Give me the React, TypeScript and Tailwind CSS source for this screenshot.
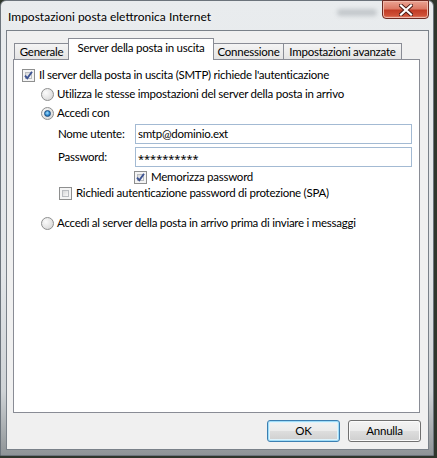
import React from "react"

const ui = "font-[family-name:Lato,sans-serif] text-[11.5px] tracking-[-0.25px] leading-[16px] text-black whitespace-nowrap"

function CheckBox({ checked = false }: { checked?: boolean }) {
  return (
    <span className="relative flex w-[13px] h-[13px] shrink-0 border border-[#8e8f8f] bg-[#f4f4f4] p-[2px]">
      <span className="flex-1 border border-[#b9bcc0] bg-[linear-gradient(135deg,#d8d9da,#f8f8f8)]" />
      {checked && (
        <svg className="absolute left-0 top-0" width="11" height="11" viewBox="0 0 11 11">
          <path d="M2 5.6 L4.3 8.2 L9 1.8" fill="none" stroke="#3d5392" strokeWidth="1.9" />
        </svg>
      )}
    </span>
  )
}

function Radio({ checked = false }: { checked?: boolean }) {
  return (
    <span className="flex items-center justify-center w-[13px] h-[13px] shrink-0 rounded-full border border-[#8e8f8f] bg-[radial-gradient(circle_at_35%_35%,#fbfbfb_0%,#e4e4e4_55%,#cfcfcf_100%)]">
      {checked && (
        <span className="w-[7px] h-[7px] rounded-full border border-[#1d4d7e] bg-[radial-gradient(circle_at_45%_40%,#a5e0ff_0%,#2f8bd2_55%,#0d4f8f_100%)]" />
      )}
    </span>
  )
}

function Tab({ label, active = false, className = "" }: { label: string; active?: boolean; className?: string }) {
  return (
    <div
      className={
        "flex items-center justify-center border border-b-0 border-[#898c95] " +
        (active
          ? "relative z-10 h-[22px] bg-white pb-[3px] "
          : "h-[17px] bg-[linear-gradient(180deg,#f4f4f4,#e3e3e3)] pb-[1px] ") +
        className
      }
    >
      {label}
    </div>
  )
}

function Field({ value, className = "" }: { value: string; className?: string }) {
  return (
    <div className={"flex items-center w-[277px] h-[20px] px-[2px] border border-[#a3bad3] bg-white " + className}>
      {value}
    </div>
  )
}

function WinButton({ label, isDefault = false }: { label: string; isDefault?: boolean }) {
  return (
    <button
      className={
        "w-[73px] h-[22px] rounded-[3px] border bg-[linear-gradient(180deg,#f3f3f3_0%,#ebebeb_48%,#dddddd_52%,#cfcfcf_100%)] " +
        (isDefault
          ? "border-[#3c7fb1] shadow-[inset_0_0_0_1px_#9fdcf8,inset_0_0_0_2px_#dff3fc]"
          : "border-[#707070] shadow-[inset_0_0_0_1px_#fbfbfb]")
      }
    >
      {label}
    </button>
  )
}

export default function App() {
  return (
    <div className={"w-[437px] h-[458px] overflow-hidden bg-[#2f362c] " + ui}>
      <div className="relative flex flex-col w-[434px] h-[456px] rounded-t-[6px] border border-[#6c747c] bg-[linear-gradient(180deg,#e9ecee_0%,#e2e5e8_60%,#cfd3d6_86%,#8f9497_100%)]">
        {/* sfondo sfocato dietro al vetro */}
        <div className="absolute left-[336px] top-[8px] w-[40px] h-[7px] rounded-full bg-[#9ea4a9] opacity-50 blur-[2px]" />

        {/* barra del titolo */}
        <div className="flex justify-between h-[29px]">
          <span className="pl-[7px] pt-[8px] text-[12px] tracking-normal [text-shadow:0_0_6px_#ffffff]">Impostazioni posta elettronica Internet</span>
          <div className="relative flex items-center justify-center w-[47px] h-[19px] mr-[4px] -mt-[1px] rounded-b-[4px] border border-[#6e2a22] bg-[linear-gradient(180deg,#eba393_0%,#dc7a66_45%,#c23c26_55%,#cf5138_85%,#e68a72_100%)] shadow-[inset_0_0_0_1px_#f0b8aa]">
            <svg width="14" height="12" viewBox="0 0 14 12">
              <path d="M2 1.5 L12 10.5 M12 1.5 L2 10.5" stroke="#4a1a14" strokeWidth="4" strokeLinecap="square" />
              <path d="M2 1.5 L12 10.5 M12 1.5 L2 10.5" stroke="#ffffff" strokeWidth="2.2" strokeLinecap="square" />
            </svg>
          </div>
        </div>

        {/* area client */}
        <div className="flex flex-col ml-[5px] w-[423px] h-[420px] border border-[#7a8189] bg-[#f0f0f0]">
          <div className="flex items-end h-[22px] mt-[7px] pl-[7px]">
            <Tab label="Generale" className="w-[55px]" />
            <Tab label="Server della posta in uscita" active className="w-[146px] -ml-[1px]" />
            <Tab label="Connessione" className="w-[71px] -ml-[1px]" />
            <Tab label="Impostazioni avanzate" className="w-[119px] -ml-[1px]" />
          </div>

          <div className="relative flex flex-col ml-[6px] -mt-[1px] w-[407px] h-[354px] border border-[#898c95] bg-white pl-[8px] pt-[7px]">
            <div className="flex items-center gap-[4px] h-[16px]">
              <CheckBox checked />
              <span>Il server della posta in uscita (SMTP) richiede l'autenticazione</span>
            </div>

            <div className="flex flex-col pl-[19px]">
              <div className="flex items-center gap-[3px] h-[16px] mt-[3px]">
                <Radio />
                <span>Utilizza le stesse impostazioni del server della posta in arrivo</span>
              </div>
              <div className="flex items-center gap-[3px] h-[16px] mt-[3px]">
                <Radio checked />
                <span>Accedi con</span>
              </div>

              <div className="flex flex-col pl-[17px]">
                <div className="flex items-center mt-[3px]">
                  <span className="w-[77px]">Nome utente:</span>
                  <Field value="smtp@dominio.ext" />
                </div>
                <div className="flex items-center mt-[3px]">
                  <span className="w-[77px]">Password:</span>
                  <Field value="**********" className="font-[family-name:'Noto_Sans',sans-serif] text-[11px] tracking-normal pt-[3px]" />
                </div>
                <div className="flex items-center gap-[4px] h-[16px] mt-[2px] pl-[76px]">
                  <CheckBox checked />
                  <span>Memorizza password</span>
                </div>
                <div className="flex items-center gap-[4px] h-[16px] pl-[1px]">
                  <CheckBox />
                  <span>Richiedi autenticazione password di protezione (SPA)</span>
                </div>
              </div>

              <div className="flex items-center gap-[3px] h-[16px] mt-[14px]">
                <Radio />
                <span>Accedi al server della posta in arrivo prima di inviare i messaggi</span>
              </div>
            </div>
          </div>

          <div className="flex justify-end gap-[8px] mt-[7px] pr-[7px]">
            <WinButton label="OK" isDefault />
            <WinButton label="Annulla" />
          </div>
        </div>
      </div>
    </div>
  )
}
